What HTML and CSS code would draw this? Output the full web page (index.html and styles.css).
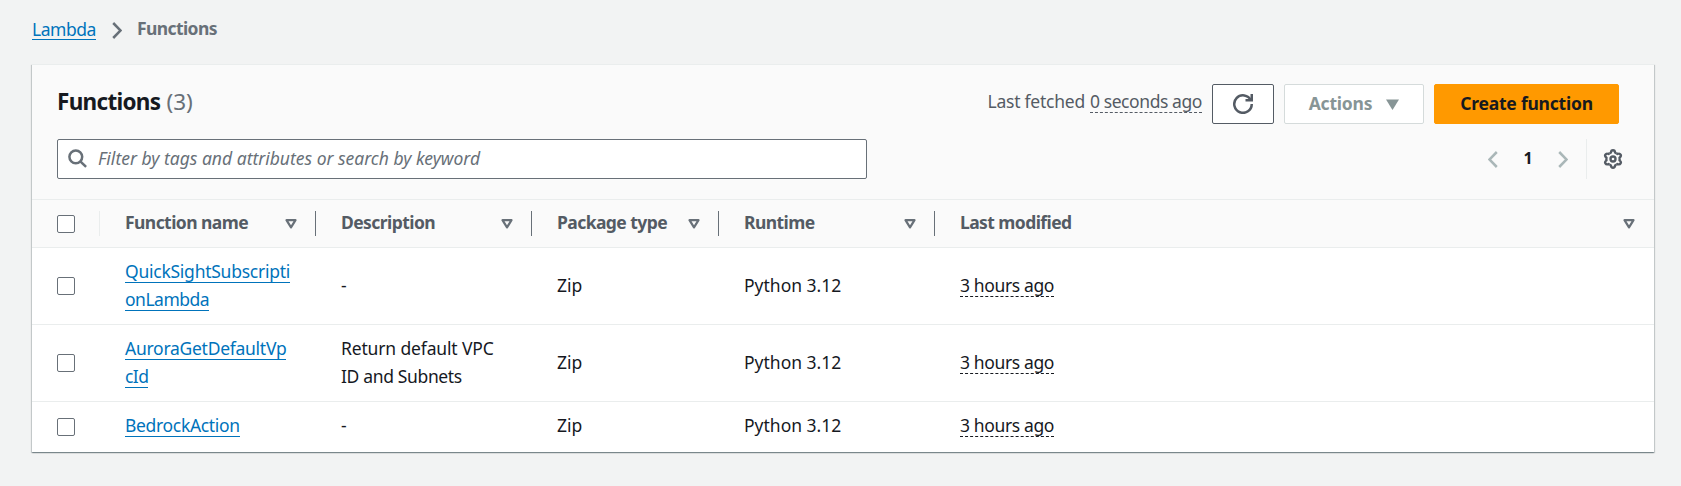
FILE: index.html
```html
<!DOCTYPE html>
<html lang="en">
<head>
<meta charset="utf-8">
<title>Functions - Lambda</title>
<link rel="stylesheet" href="styles.css">
</head>
<body>
<nav class="breadcrumbs">
  <a class="link crumb-link" href="#">Lambda</a>
  <svg class="crumb-sep" width="10" height="17" viewBox="0 0 10 17"><path d="M1.2 1 8.6 8.5 1.2 16"/></svg>
  <span class="crumb-current">Functions</span>
</nav>
<main class="card">
  <header class="card-header">
    <div class="title-row">
      <h1 class="title"><span class="title-text">Functions</span><span class="counter">(3)</span></h1>
      <div class="actions">
        <span class="fetched"><span class="fetched-label">Last fetched</span><span class="fetched-time dashed">0 seconds ago</span></span>
        <button class="btn btn-icon" aria-label="Refresh"><svg width="20" height="20" viewBox="0 0 16 16"><path d="M10 5h5V0"/><path d="M15 8a7 7 0 1 1-.7-3"/></svg></button>
        <button class="btn btn-disabled"><span class="btn-label">Actions</span><svg width="13" height="11" viewBox="0 0 13 11"><path d="M0 .5h13L6.5 11z"/></svg></button>
        <button class="btn btn-primary"><span class="btn-label">Create function</span></button>
      </div>
    </div>
    <div class="filter-row">
      <div class="search">
        <svg width="20" height="20" viewBox="0 0 20 20"><circle cx="7.8" cy="7.8" r="6.4"/><path d="m12.3 12.3 5.8 5.6"/></svg>
        <span class="placeholder">Filter by tags and attributes or search by keyword</span>
      </div>
      <div class="pager">
        <svg class="chev" width="10" height="17" viewBox="0 0 10 17"><path d="M8.8 1 1.4 8.5 8.8 16"/></svg>
        <span class="page">1</span>
        <svg class="chev" width="10" height="17" viewBox="0 0 10 17"><path d="M1.2 1 8.6 8.5 1.2 16"/></svg>
        <span class="prefs"><svg width="20" height="20" viewBox="0 0 16 16"><defs><path id="lobe" d="M5.35 3.41 6.3 2.9Q6.5 1 8 1T9.7 2.9L10.65 3.41"/></defs><use href="#lobe"/><use href="#lobe" transform="rotate(60 8 8)"/><use href="#lobe" transform="rotate(120 8 8)"/><use href="#lobe" transform="rotate(180 8 8)"/><use href="#lobe" transform="rotate(240 8 8)"/><use href="#lobe" transform="rotate(300 8 8)"/><circle cx="8" cy="8" r="2"/></svg></span>
      </div>
    </div>
  </header>
  <div class="table">
    <div class="row head">
      <div class="cell check"><span class="box"></span></div>
      <div class="cell"><span class="label">Function name</span><svg class="sort" width="12" height="10" viewBox="0 0 12 10"><path d="M1.5 1.2h9L6 8.4z"/></svg></div>
      <div class="cell"><span class="label">Description</span><svg class="sort" width="12" height="10" viewBox="0 0 12 10"><path d="M1.5 1.2h9L6 8.4z"/></svg></div>
      <div class="cell"><span class="label">Package type</span><svg class="sort" width="12" height="10" viewBox="0 0 12 10"><path d="M1.5 1.2h9L6 8.4z"/></svg></div>
      <div class="cell"><span class="label">Runtime</span><svg class="sort" width="12" height="10" viewBox="0 0 12 10"><path d="M1.5 1.2h9L6 8.4z"/></svg></div>
      <div class="cell"><span class="label">Last modified</span><svg class="sort" width="12" height="10" viewBox="0 0 12 10"><path d="M1.5 1.2h9L6 8.4z"/></svg></div>
    </div>
    <div class="row tall">
      <div class="cell check"><span class="box"></span></div>
      <div class="cell"><a class="lines" href="#"><span class="link n1">QuickSightSubscripti</span><span class="link n2">onLambda</span></a></div>
      <div class="cell"><span class="plain">-</span></div>
      <div class="cell"><span class="plain">Zip</span></div>
      <div class="cell"><span class="plain">Python 3.12</span></div>
      <div class="cell"><span class="dashed ago">3 hours ago</span></div>
    </div>
    <div class="row tall">
      <div class="cell check"><span class="box"></span></div>
      <div class="cell"><a class="lines" href="#"><span class="link n3">AuroraGetDefaultVp</span><span class="link n4">cId</span></a></div>
      <div class="cell"><span class="lines desc"><span class="d1">Return default VPC</span><span class="d2">ID and Subnets</span></span></div>
      <div class="cell"><span class="plain">Zip</span></div>
      <div class="cell"><span class="plain">Python 3.12</span></div>
      <div class="cell"><span class="dashed ago">3 hours ago</span></div>
    </div>
    <div class="row short">
      <div class="cell check"><span class="box"></span></div>
      <div class="cell"><a class="link n5" href="#">BedrockAction</a></div>
      <div class="cell"><span class="plain">-</span></div>
      <div class="cell"><span class="plain">Zip</span></div>
      <div class="cell"><span class="plain">Python 3.12</span></div>
      <div class="cell"><span class="dashed ago">3 hours ago</span></div>
    </div>
  </div>
</main>
</body>
</html>
```
FILE: styles.css
```css
* { box-sizing: border-box; }
body {
  margin: 0;
  height: 486px;
  overflow: hidden;
  background: #f2f3f3;
  color: #16191f;
  font: 17.5px/28px "Noto Sans", "Open Sans", sans-serif;
  padding: 0 27px 0 32px;
  white-space: nowrap;
}
svg { display: block; fill: none; flex: none; }
.link { color: #0073bb; text-decoration: none; border-bottom: 1px solid #0073bb; line-height: 21px; }
.dashed { border-bottom: 1px dashed currentColor; line-height: 21px; }

.breadcrumbs { display: flex; align-items: center; height: 64px; padding-bottom: 5px; }
.crumb-link { display: block; letter-spacing: -.45px; line-height: 20px; }
.crumb-sep { margin: 1px 15px 0 16px; stroke: #687078; stroke-width: 2.5; }
.crumb-current { color: #687078; font-weight: 700; letter-spacing: -.6px; padding-bottom: 3px; }

.card {
  height: 388px;
  background: #fff;
  border-top: 1px solid #eaeded;
  box-shadow: 0 1px 1px 0 rgba(0,28,36,.3), 1px 1px 1px 0 rgba(0,28,36,.15), -1px 1px 1px 0 rgba(0,28,36,.15);
}
.card-header { height: 135px; background: #fafafa; border-bottom: 1px solid #eaeded; padding: 19px 27px 0 25px; }
.title-row { display: flex; justify-content: space-between; align-items: center; height: 40px; padding-right: 8px; }
.title { margin: 0; font-size: 22.5px; line-height: 30px; font-weight: 700; display: flex; gap: 6px; padding-bottom: 4px; }
.title-text { letter-spacing: -.7px; }
.counter { font-weight: 400; color: #687078; }
.actions { display: flex; align-items: center; gap: 10px; }
.fetched { display: flex; align-items: baseline; gap: 5px; color: #545b64; padding-bottom: 6px; }
.fetched-label { letter-spacing: -.24px; }
.fetched-time { letter-spacing: -.42px; }
.btn {
  height: 40px;
  display: flex;
  align-items: center;
  justify-content: center;
  border: 1px solid #545b64;
  border-radius: 2px;
  background: #fff;
  padding: 0;
  font: 700 17.5px/28px "Noto Sans", sans-serif;
  letter-spacing: -.22px;
}
.btn-label { padding-bottom: 3px; }
.btn-icon { width: 62px; stroke: #545b64; stroke-width: 2; }
.btn-disabled { width: 140px; gap: 14px; border-color: #d5dbdb; color: #879596; }
.btn-disabled svg { fill: #879596; }
.btn-primary { width: 185px; background: #f90; border-color: #f90; color: #16191f; }

.filter-row { display: flex; justify-content: space-between; margin-top: 15px; }
.search { width: 810px; height: 40px; border: 1px solid #687078; border-radius: 2px; background: #fff; display: flex; align-items: center; gap: 10px; padding-left: 10px; }
.search svg { stroke: #687078; stroke-width: 2.5; }
.placeholder { font-style: italic; color: #687078; padding-bottom: 2px; }
.pager { display: flex; align-items: center; height: 40px; }
.chev { stroke: #aab7b8; stroke-width: 2.5; }
.page { width: 60px; text-align: center; font-weight: 700; font-size: 16px; padding-bottom: 2px; }
.prefs { margin-left: 18px; width: 41px; height: 40px; border-left: 1px solid #eaeded; padding: 10px 0 0 16px; stroke: #545b64; stroke-width: 1.9; }

.row { display: grid; grid-template-columns: 68px 216px 216px 187px 216px 1fr; border-bottom: 1px solid #eaeded; }
.head { height: 48px; background: #fafafa; color: #545b64; font-weight: 700; letter-spacing: -.57px; }
.tall { height: 77px; }
.short { height: 50px; border-bottom: 0; }
.cell { display: flex; align-items: center; justify-content: space-between; padding: 0 19px 0 25px; }
.plain { padding-bottom: 2px; }
.short .plain { padding-bottom: 4px; }
.short .link, .short .dashed { margin-bottom: 2px; }
.head .cell { height: 25px; margin-top: 11px; border-right: 1px solid #687078; padding-right: 18px; }
.head .check { border-color: #eaeded; }
.head .cell:last-child { border: 0; padding-right: 19px; }
.label { padding-bottom: 3px; }
.sort { stroke: #687078; stroke-width: 2.2; stroke-linejoin: round; }
.box { width: 18px; height: 18px; border: 1px solid #687078; border-radius: 2px; background: #fff; }
.lines { display: flex; flex-direction: column; align-items: flex-start; gap: 6px; color: inherit; text-decoration: none; line-height: 22px; }
.desc { padding-bottom: 2px; }
.n1 { letter-spacing: -.25px; }
.n2 { letter-spacing: -.5px; }
.n3 { letter-spacing: -.27px; }
.n4 { letter-spacing: -.6px; }
.n5 { letter-spacing: -.33px; }
.d1 { letter-spacing: -.15px; }
.d2 { letter-spacing: -.35px; }
.ago { letter-spacing: -.37px; }
```
